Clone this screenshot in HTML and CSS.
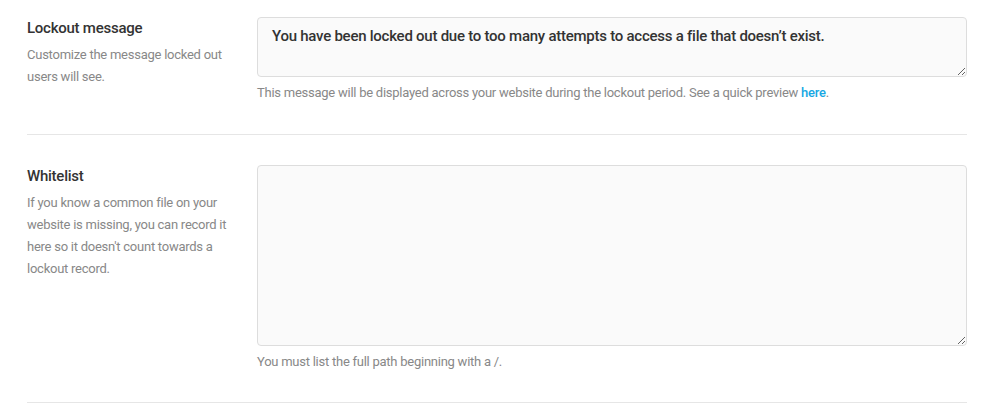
FILE: index.html
```html
<!DOCTYPE html>
<html lang="en">
<head>
    <title>Lockout settings</title>
    <meta charset="UTF-8">
    <meta name="viewport" content="width=device-width, initial-scale=1.0">
    <link rel="stylesheet" href="styles.css">
</head>
<body>
    <div class="settings">
        <div class="setting-row">
            <div class="setting-label">
                <h3>Lockout message</h3>
                <p>Customize the message locked out users will see.</p>
            </div>
            <div class="setting-field">
                <textarea class="message-box">You have been locked out due to too many attempts to access a file that doesn’t exist.</textarea>
                <p class="hint">This message will be displayed across your website during the lockout period. See a quick preview <a href="#">here</a>.</p>
            </div>
        </div>

        <div class="setting-row">
            <div class="setting-label">
                <h3>Whitelist</h3>
                <p>If you know a common file on your website is missing, you can record it here so it doesn't count towards a lockout record.</p>
            </div>
            <div class="setting-field">
                <textarea class="whitelist-box"></textarea>
                <p class="hint">You must list the full path beginning with a /.</p>
            </div>
        </div>
    </div>
</body>
</html>
```

FILE: styles.css
```css
* {
    margin: 0;
    padding: 0;
    box-sizing: border-box;
}

body {
    font-family: Roboto, "Liberation Sans", sans-serif;
    letter-spacing: -0.25px;
    background-color: #fff;
    color: #333;
}

.settings {
    padding: 0 28px 0 27px;
}

.setting-row {
    display: flex;
    gap: 30px;
    padding: 30px 0 29px;
    border-bottom: 1px solid #e6e6e6;
}

.setting-row:first-child {
    padding-top: 17px;
    padding-bottom: 30px;
}

.setting-label {
    width: 200px;
    flex-shrink: 0;
}

.setting-label h3 {
    font-size: 15px;
    font-weight: 500;
    line-height: 22px;
    color: #333;
    margin-bottom: 5px;
}

.setting-label p {
    font-size: 13px;
    line-height: 22px;
    color: #888;
}

.setting-field {
    flex: 1;
}

textarea {
    display: block;
    width: 100%;
    font-family: inherit;
    font-size: 15px;
    font-weight: 500;
    line-height: 22px;
    letter-spacing: -0.25px;
    color: #333;
    background-color: #fafafa;
    border: 1px solid #ddd;
    border-radius: 4px;
    padding: 7px 14px;
    resize: vertical;
}

.message-box {
    height: 60px;
}

.whitelist-box {
    height: 181px;
}

.hint {
    font-size: 13px;
    line-height: 22px;
    color: #888;
    margin-top: 5px;
}

.hint a {
    color: #17a8e3;
    font-weight: 500;
    text-decoration: none;
}
```
